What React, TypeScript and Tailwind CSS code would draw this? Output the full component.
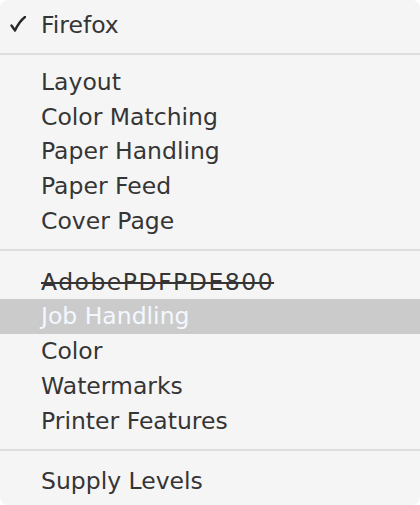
import React from 'react';

type Item = { label: string; checked?: boolean; disabled?: boolean; active?: boolean };

const groups: { items: Item[]; sep: string }[] = [
  { items: [{ label: 'Firefox', checked: true }], sep: 'mt-[10px] mb-[10px]' },
  {
    items: [
      { label: 'Layout' },
      { label: 'Color Matching' },
      { label: 'Paper Handling' },
      { label: 'Paper Feed' },
      { label: 'Cover Page' },
    ],
    sep: 'mt-[10px] mb-[14px]',
  },
  {
    items: [
      { label: 'AdobePDFPDE800', disabled: true },
      { label: 'Job Handling', active: true },
      { label: 'Color' },
      { label: 'Watermarks' },
      { label: 'Printer Features' },
    ],
    sep: 'mt-[11px] mb-[13px]',
  },
  { items: [{ label: 'Supply Levels' }], sep: '' },
];

function Check() {
  return (
    <svg width="16" height="16" viewBox="0 0 16 16" className="ml-[10px] mt-[-2px]">
      <path d="M1.5 9.5 L5 14.5 C7.5 9 10.5 4.5 15 1" fill="none" stroke="#2a2a2a" strokeWidth="2.4" strokeLinecap="round" strokeLinejoin="round" />
    </svg>
  );
}

function MenuRow({ item }: { item: Item }) {
  return (
    <div
      className={
        'flex items-center h-[34.75px] leading-[34.75px] ' +
        (item.active ? 'bg-[#cbcbcb] text-[#f3f8ff]' : 'text-[#353535]')
      }
    >
      <span className="w-[41px] flex items-center">{item.checked ? <Check /> : null}</span>
      <span className={item.disabled ? 'line-through decoration-[#353535] decoration-[2px] tracking-[1.5px]' : ''}>
        {item.label}
      </span>
    </div>
  );
}

export default function App() {
  return (
    <div className="w-[420px] h-[505px] bg-white">
      <div
        className="w-[420px] h-[505px] bg-[#f5f5f5] rounded-[8px] overflow-hidden pt-[8px] text-[23.5px]"
        style={{ fontFamily: '"DejaVu Sans", "Liberation Sans", sans-serif' }}
      >
        {groups.map((g, i) => (
          <div key={i}>
            {g.items.map((it) => (
              <MenuRow key={it.label} item={it} />
            ))}
            {g.sep && <div className={'h-[2px] bg-[#dedede] ' + g.sep} />}
          </div>
        ))}
      </div>
    </div>
  );
}
